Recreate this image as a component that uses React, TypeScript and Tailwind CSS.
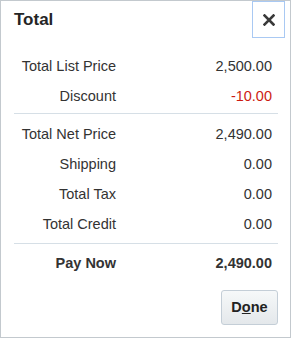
import React from "react";

interface Line {
  label: string;
  value: string;
  red?: boolean;
}

const listLines: Line[] = [
  { label: "Total List Price", value: "2,500.00" },
  { label: "Discount", value: "-10.00", red: true },
];

const netLines: Line[] = [
  { label: "Total Net Price", value: "2,490.00" },
  { label: "Shipping", value: "0.00" },
  { label: "Total Tax", value: "0.00" },
  { label: "Total Credit", value: "0.00" },
];

const Row = ({ line, bold }: { line: Line; bold?: boolean }) => (
  <div
    className={`grid grid-cols-[102px_1fr] h-[30px] leading-[30px] text-[14.5px] pr-[6px] ${
      bold ? "font-bold text-[#333]" : "text-[#333]"
    }`}
  >
    <span className="text-right">{line.label}</span>
    <span className={`text-right ${line.red ? "text-[#cc1c12]" : ""}`}>
      {line.value}
    </span>
  </div>
);

const CloseIcon = () => (
  <svg width="12" height="12" viewBox="0 0 12 12">
    <path
      d="M1.5 1.5 L10.5 10.5 M10.5 1.5 L1.5 10.5"
      stroke="#3a3a3a"
      strokeWidth="2.6"
      strokeLinecap="square"
    />
  </svg>
);

export default function App() {
  return (
    <div
      className="w-[291px] h-[338px] border border-[#c3c9ce] bg-white flex flex-col"
      style={{ fontFamily: '"Liberation Sans", Arial, sans-serif' }}
    >
      <div className="flex items-start justify-between pl-[13px] pr-[5px]">
        <h1 className="mt-[9px] text-[17px] leading-[20px] font-bold text-[#252525]">
          Total
        </h1>
        <button className="w-[33px] h-[37px] border border-[#a9c9f3] bg-white flex items-center justify-center">
          <CloseIcon />
        </button>
      </div>

      <div className="pl-[13px] pr-[12px] mt-[13px]">
        {listLines.map((l) => (
          <Row key={l.label} line={l} />
        ))}
        <div className="h-px bg-[#d6dfe6] mt-[2px] mb-[5px]" />
        {netLines.map((l) => (
          <Row key={l.label} line={l} />
        ))}
        <div className="h-px bg-[#d6dfe6] mt-[4px] mb-[4px]" />
        <Row line={{ label: "Pay Now", value: "2,490.00" }} bold />

        <div className="flex justify-end mt-[12px]">
          <button className="w-[57px] h-[35px] rounded-[3px] border border-[#c4ced7] bg-gradient-to-b from-[#f6f8f9] to-[#e4e8eb] text-[14.5px] font-bold text-[#222]">
            D<span className="underline">o</span>ne
          </button>
        </div>
      </div>
    </div>
  );
}
